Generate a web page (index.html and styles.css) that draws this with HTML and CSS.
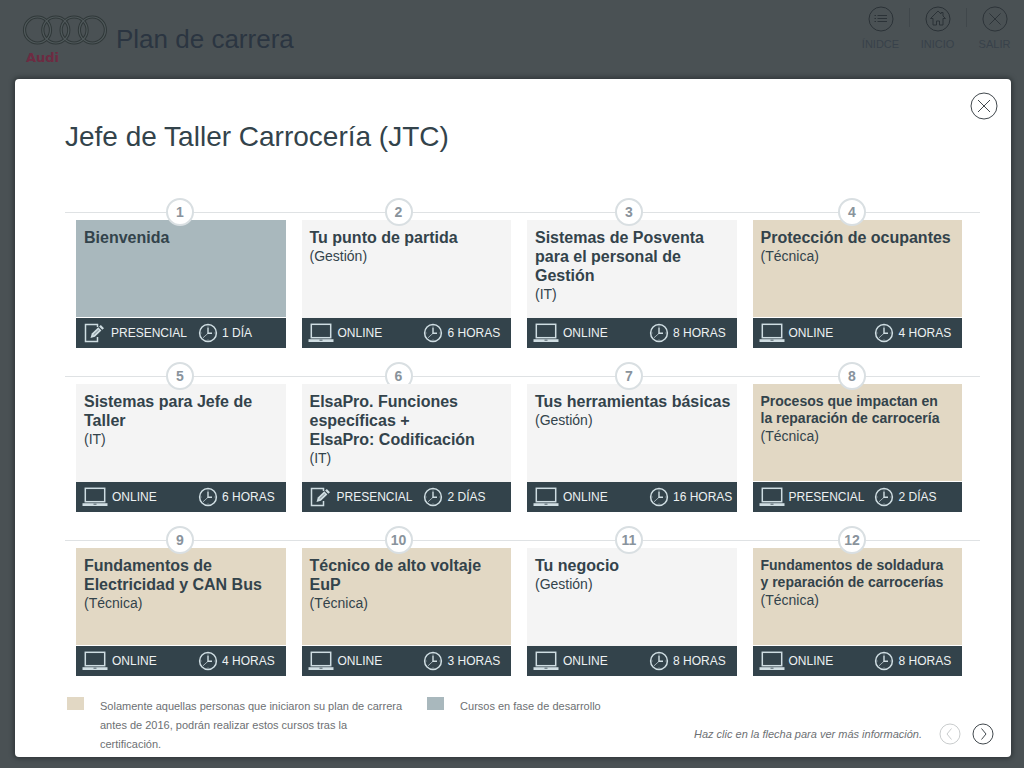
FILE: index.html
```
<!DOCTYPE html>
<html lang="es">
<head>
<meta charset="UTF-8">
<meta name="viewport" content="width=device-width, initial-scale=1.0">
<title>Plan de carrera</title>
<link rel="stylesheet" href="styles.css">
</head>
<body>

<!-- Shared icons -->
<svg class="sprite" aria-hidden="true">
    <symbol id="laptop" viewBox="0 0 26 20">
        <rect x="3.3" y="1.3" width="19.4" height="13.4" fill="none" stroke="currentColor" stroke-width="1.5"/>
        <path d="M0.5 16.2H25.5V19H0.5Z" fill="currentColor"/>
        <path d="M11.5 17.2H14.5" stroke="#33434b" stroke-width="0.8"/>
    </symbol>
    <symbol id="pencil" viewBox="0 0 20 20">
        <path d="M13.5 4V1.5H1.5V18.5H13.5V14" fill="none" stroke="currentColor" stroke-width="1.5"/>
        <path d="M6.5 15L7.8 10.6L14.3 4.3L17.4 7.5L10.9 13.7Z" fill="currentColor"/>
        <path d="M15.1 3.6L16.8 2L20 5.2L18.3 6.8Z" fill="currentColor"/>
        <path d="M9.6 11.8L14.8 6.9" stroke="#33434b" stroke-width="0.6"/>
    </symbol>
    <symbol id="clock" viewBox="0 0 20 20">
        <circle cx="10" cy="10" r="8.4" fill="none" stroke="currentColor" stroke-width="1.5"/>
        <path d="M10 4.5V10.3H14" fill="none" stroke="currentColor" stroke-width="1.4"/>
        <path d="M10 10.3L5 14.8M10 2.5V3.5M10 16.5V17.5M2.5 10H3.5M16.5 10H17.5" fill="none" stroke="currentColor" stroke-width="0.7"/>
    </symbol>
    <symbol id="cross" viewBox="0 0 28 28">
        <circle cx="14" cy="14" r="13" fill="none" stroke="currentColor"/>
        <path d="M8 8L20 20M20 8L8 20" stroke="currentColor"/>
    </symbol>
</svg>

<header class="topbar">
    <a href="#" class="logo" aria-label="Audi">
        <svg class="rings" viewBox="0 0 86 32" aria-hidden="true">
            <g fill="none" stroke="#303839" stroke-width="3.2">
                <circle cx="15.5" cy="16" r="13"/>
                <circle cx="33.8" cy="16" r="13"/>
                <circle cx="52.1" cy="16" r="13"/>
                <circle cx="70.4" cy="16" r="13"/>
            </g>
            <g fill="none" stroke="#50595b" stroke-width="1.2">
                <circle cx="15.5" cy="16" r="13"/>
                <circle cx="33.8" cy="16" r="13"/>
                <circle cx="52.1" cy="16" r="13"/>
                <circle cx="70.4" cy="16" r="13"/>
            </g>
        </svg>
        <span class="brand">Audi</span>
    </a>
    <h1>Plan de carrera</h1>
    <nav>
        <a href="#">
            <svg viewBox="0 0 26 26" aria-hidden="true">
                <g fill="none" stroke="currentColor">
                    <circle cx="13" cy="13" r="12"/>
                    <path d="M9.5 9.5H19M9.5 12.5H19M9.5 15.5H19M6.5 9.5H8M6.5 12.5H8M6.5 15.5H8"/>
                </g>
            </svg>
            ÍNIDCE
        </a>
        <a href="#">
            <svg viewBox="0 0 26 26" aria-hidden="true">
                <g fill="none" stroke="currentColor">
                    <circle cx="13" cy="13" r="12"/>
                    <path d="M8 12.5H5.5L13 5L16 8V6.5H18V10L20.5 12.5H18V19H14.5V15H11.5V19H8Z"/>
                </g>
            </svg>
            INICIO
        </a>
        <a href="#">
            <svg aria-hidden="true"><use href="#cross"/></svg>
            SALIR
        </a>
    </nav>
</header>

<main class="modal">
    <button type="button" class="close" aria-label="Cerrar"><svg aria-hidden="true"><use href="#cross"/></svg></button>
    <h2>Jefe de Taller Carrocería (JTC)</h2>

    <section class="row">
        <div class="steps"><span>1</span><span>2</span><span>3</span><span>4</span></div>
        <div class="cards">
            <article class="card blue">
                <div class="info"><h3>Bienvenida</h3></div>
                <div class="foot">
                    <span class="mode"><svg class="pencil"><use href="#pencil"/></svg>PRESENCIAL</span>
                    <span class="time"><svg><use href="#clock"/></svg>1 DÍA</span>
                </div>
            </article>
            <article class="card">
                <div class="info"><h3>Tu punto de partida</h3><p>(Gestión)</p></div>
                <div class="foot">
                    <span class="mode"><svg><use href="#laptop"/></svg>ONLINE</span>
                    <span class="time"><svg><use href="#clock"/></svg>6 HORAS</span>
                </div>
            </article>
            <article class="card">
                <div class="info"><h3>Sistemas de Posventa para el personal de Gestión</h3><p>(IT)</p></div>
                <div class="foot">
                    <span class="mode"><svg><use href="#laptop"/></svg>ONLINE</span>
                    <span class="time"><svg><use href="#clock"/></svg>8 HORAS</span>
                </div>
            </article>
            <article class="card sand">
                <div class="info"><h3>Protección de ocupantes</h3><p>(Técnica)</p></div>
                <div class="foot">
                    <span class="mode"><svg><use href="#laptop"/></svg>ONLINE</span>
                    <span class="time"><svg><use href="#clock"/></svg>4 HORAS</span>
                </div>
            </article>
        </div>
    </section>

    <section class="row">
        <div class="steps"><span>5</span><span>6</span><span>7</span><span>8</span></div>
        <div class="cards">
            <article class="card">
                <div class="info"><h3>Sistemas para Jefe de Taller</h3><p>(IT)</p></div>
                <div class="foot">
                    <span class="mode"><svg><use href="#laptop"/></svg>ONLINE</span>
                    <span class="time"><svg><use href="#clock"/></svg>6 HORAS</span>
                </div>
            </article>
            <article class="card front">
                <div class="info"><h3>ElsaPro. Funciones específicas +<br>ElsaPro: Codificación</h3><p>(IT)</p></div>
                <div class="foot">
                    <span class="mode"><svg class="pencil"><use href="#pencil"/></svg>PRESENCIAL</span>
                    <span class="time"><svg><use href="#clock"/></svg>2 DÍAS</span>
                </div>
            </article>
            <article class="card">
                <div class="info"><h3>Tus herramientas básicas</h3><p>(Gestión)</p></div>
                <div class="foot">
                    <span class="mode"><svg><use href="#laptop"/></svg>ONLINE</span>
                    <span class="time"><svg><use href="#clock"/></svg>16 HORAS</span>
                </div>
            </article>
            <article class="card sand compact">
                <div class="info"><h3>Procesos que impactan en<br>la reparación de carrocería</h3><p>(Técnica)</p></div>
                <div class="foot">
                    <span class="mode"><svg><use href="#laptop"/></svg>PRESENCIAL</span>
                    <span class="time"><svg><use href="#clock"/></svg>2 DÍAS</span>
                </div>
            </article>
        </div>
    </section>

    <section class="row">
        <div class="steps"><span>9</span><span>10</span><span>11</span><span>12</span></div>
        <div class="cards">
            <article class="card sand">
                <div class="info"><h3>Fundamentos de Electricidad y CAN Bus</h3><p>(Técnica)</p></div>
                <div class="foot">
                    <span class="mode"><svg><use href="#laptop"/></svg>ONLINE</span>
                    <span class="time"><svg><use href="#clock"/></svg>4 HORAS</span>
                </div>
            </article>
            <article class="card sand">
                <div class="info"><h3>Técnico de alto voltaje EuP</h3><p>(Técnica)</p></div>
                <div class="foot">
                    <span class="mode"><svg><use href="#laptop"/></svg>ONLINE</span>
                    <span class="time"><svg><use href="#clock"/></svg>3 HORAS</span>
                </div>
            </article>
            <article class="card">
                <div class="info"><h3>Tu negocio</h3><p>(Gestión)</p></div>
                <div class="foot">
                    <span class="mode"><svg><use href="#laptop"/></svg>ONLINE</span>
                    <span class="time"><svg><use href="#clock"/></svg>8 HORAS</span>
                </div>
            </article>
            <article class="card sand compact">
                <div class="info"><h3>Fundamentos de soldadura<br>y reparación de carrocerías</h3><p>(Técnica)</p></div>
                <div class="foot">
                    <span class="mode"><svg><use href="#laptop"/></svg>ONLINE</span>
                    <span class="time"><svg><use href="#clock"/></svg>8 HORAS</span>
                </div>
            </article>
        </div>
    </section>

    <footer>
        <ul class="legend">
            <li class="sand">Solamente aquellas personas que iniciaron su plan de carrera<br>antes de 2016, podrán realizar estos cursos tras la<br>certificación.</li>
            <li class="blue">Cursos en fase de desarrollo</li>
        </ul>
        <div class="pager">
            <em>Haz clic en la flecha para ver más información.</em>
            <button type="button" class="prev" disabled aria-label="Anterior">
                <svg viewBox="0 0 22 22"><g fill="none" stroke="currentColor"><circle cx="11" cy="11" r="10"/><path d="M12.5 5.5L8 11L12.5 16.5"/></g></svg>
            </button>
            <button type="button" class="next" aria-label="Siguiente">
                <svg viewBox="0 0 22 22"><g fill="none" stroke="currentColor"><circle cx="11" cy="11" r="10"/><path d="M9.5 5.5L14 11L9.5 16.5"/></g></svg>
            </button>
        </div>
    </footer>
</main>

</body>
</html>
```

FILE: styles.css
```
* {
    box-sizing: border-box;
}
body {
    font-family: "Liberation Sans", Arial, sans-serif;
    margin: 0;
    background-color: #4a5154;
    color: #33434b;
}
h1, h2, h3, p, ul {
    margin: 0;
    padding: 0;
}
svg {
    display: block;
    flex: none;
}
button {
    padding: 0;
    border: 0;
    background: none;
    cursor: pointer;
}
.sprite {
    position: absolute;
    width: 0;
    height: 0;
}

/* Top bar */
.topbar {
    display: flex;
    align-items: flex-start;
    height: 79px;
    padding-left: 22px;
}
.logo {
    padding-top: 14px;
    text-decoration: none;
}
.rings {
    width: 86px;
    height: 32px;
}
.brand {
    display: block;
    padding-left: 4px;
    font-family: "DejaVu Sans", sans-serif;
    font-size: 13px;
    font-weight: bold;
    line-height: 24px;
    color: #6d2b42;
}
.topbar h1 {
    margin-left: 8px;
    padding-top: 24px;
    font-size: 26px;
    font-weight: normal;
    line-height: 30px;
    color: #2b3541;
}
nav {
    display: flex;
    margin-left: auto;
    padding: 6px 1px 0 0;
}
nav a {
    position: relative;
    width: 57px;
    font-size: 11px;
    line-height: 14px;
    text-align: center;
    text-decoration: none;
    color: #38414a;
}
nav svg {
    width: 26px;
    height: 26px;
    margin: 0 auto 5px;
    color: #2b3237;
}
nav a + a::before {
    content: "";
    position: absolute;
    left: 0;
    top: 2px;
    height: 19px;
    border-left: 1px solid #40474b;
}

/* Modal window */
.modal {
    position: relative;
    margin: 0 13px 11px 15px;
    padding: 41px 17px 3px 50px;
    background-color: #fff;
    border-radius: 4px;
    box-shadow: 0 0 4px 2px #33393c;
}
.close {
    position: absolute;
    top: 13px;
    right: 13px;
}
.close svg {
    width: 28px;
    height: 28px;
    color: #42494e;
}
h2 {
    margin-bottom: 44px;
    font-size: 28px;
    font-weight: normal;
    line-height: 34px;
}

/* Course rows */
.row {
    margin: 0 14px 14px 0;
}
.steps {
    position: relative;
    z-index: 1;
    display: grid;
    grid-template-columns: 230fr 207fr 254fr 192fr 32fr;
    justify-items: center;
    background: linear-gradient(#dfe2e4, #dfe2e4) center / 100% 1px no-repeat;
}
.steps span {
    width: 28px;
    height: 28px;
    border: 2px solid #d9dfe2;
    border-radius: 50%;
    background-color: #fff;
    font-size: 14px;
    font-weight: bold;
    line-height: 25px;
    text-align: center;
    color: #89939c;
}
.cards {
    display: grid;
    grid-template-columns: repeat(4, 1fr);
    gap: 16px;
    margin: -6px 18px 0 11px;
}
.card {
    position: relative;
    background-color: #f4f4f4;
}
.front {
    z-index: 2;
}
.info {
    min-height: 98px;
    padding: 8px 0 0 8px;
}
.sand .info {
    background-color: #e2d8c4;
    border-bottom: 1px solid #fff;
}
.blue .info {
    background-color: #a9b8bd;
    border-bottom: 1px solid #fff;
}
.card h3 {
    font-size: 16px;
    line-height: 19px;
}
.compact h3 {
    font-size: 14px;
    line-height: 17px;
}
.compact .info {
    padding-top: 9px;
}
.card p {
    font-size: 14px;
    line-height: 18px;
}
.foot {
    display: flex;
    height: 30px;
    padding-left: 6px;
    background-color: #33434b;
    color: #edf1f2;
    font-size: 12px;
}
.foot span {
    display: flex;
    align-items: center;
    white-space: nowrap;
}
.foot svg {
    height: 20px;
    color: #cfdde2;
}
.mode {
    width: 57%;
    gap: 4px;
}
.mode svg {
    width: 26px;
}
.mode .pencil {
    width: 20px;
    margin: 0 3px 0 2px;
}
.time {
    gap: 4px;
}
.time svg {
    width: 20px;
}

/* Legend and pager */
footer {
    display: flex;
    justify-content: space-between;
    padding-top: 7px;
    color: #6d7073;
    font-size: 11px;
}
.legend {
    display: flex;
    gap: 25px;
    padding-left: 2px;
    list-style: none;
    line-height: 19px;
    white-space: nowrap;
}
.legend li {
    position: relative;
    padding-left: 33px;
}
.legend li::before {
    content: "";
    position: absolute;
    left: 0;
    top: 0;
    width: 17px;
    height: 13px;
    background-color: #e2d8c4;
}
.legend .blue::before {
    background-color: #a9b8bd;
}
.pager {
    display: flex;
    align-items: center;
    align-self: flex-end;
    padding-bottom: 9px;
    white-space: nowrap;
}
.pager svg {
    width: 22px;
    height: 22px;
}
.prev {
    margin: 0 11px 0 17px;
    color: #c9cccd;
}
.next {
    color: #42494e;
}
```
